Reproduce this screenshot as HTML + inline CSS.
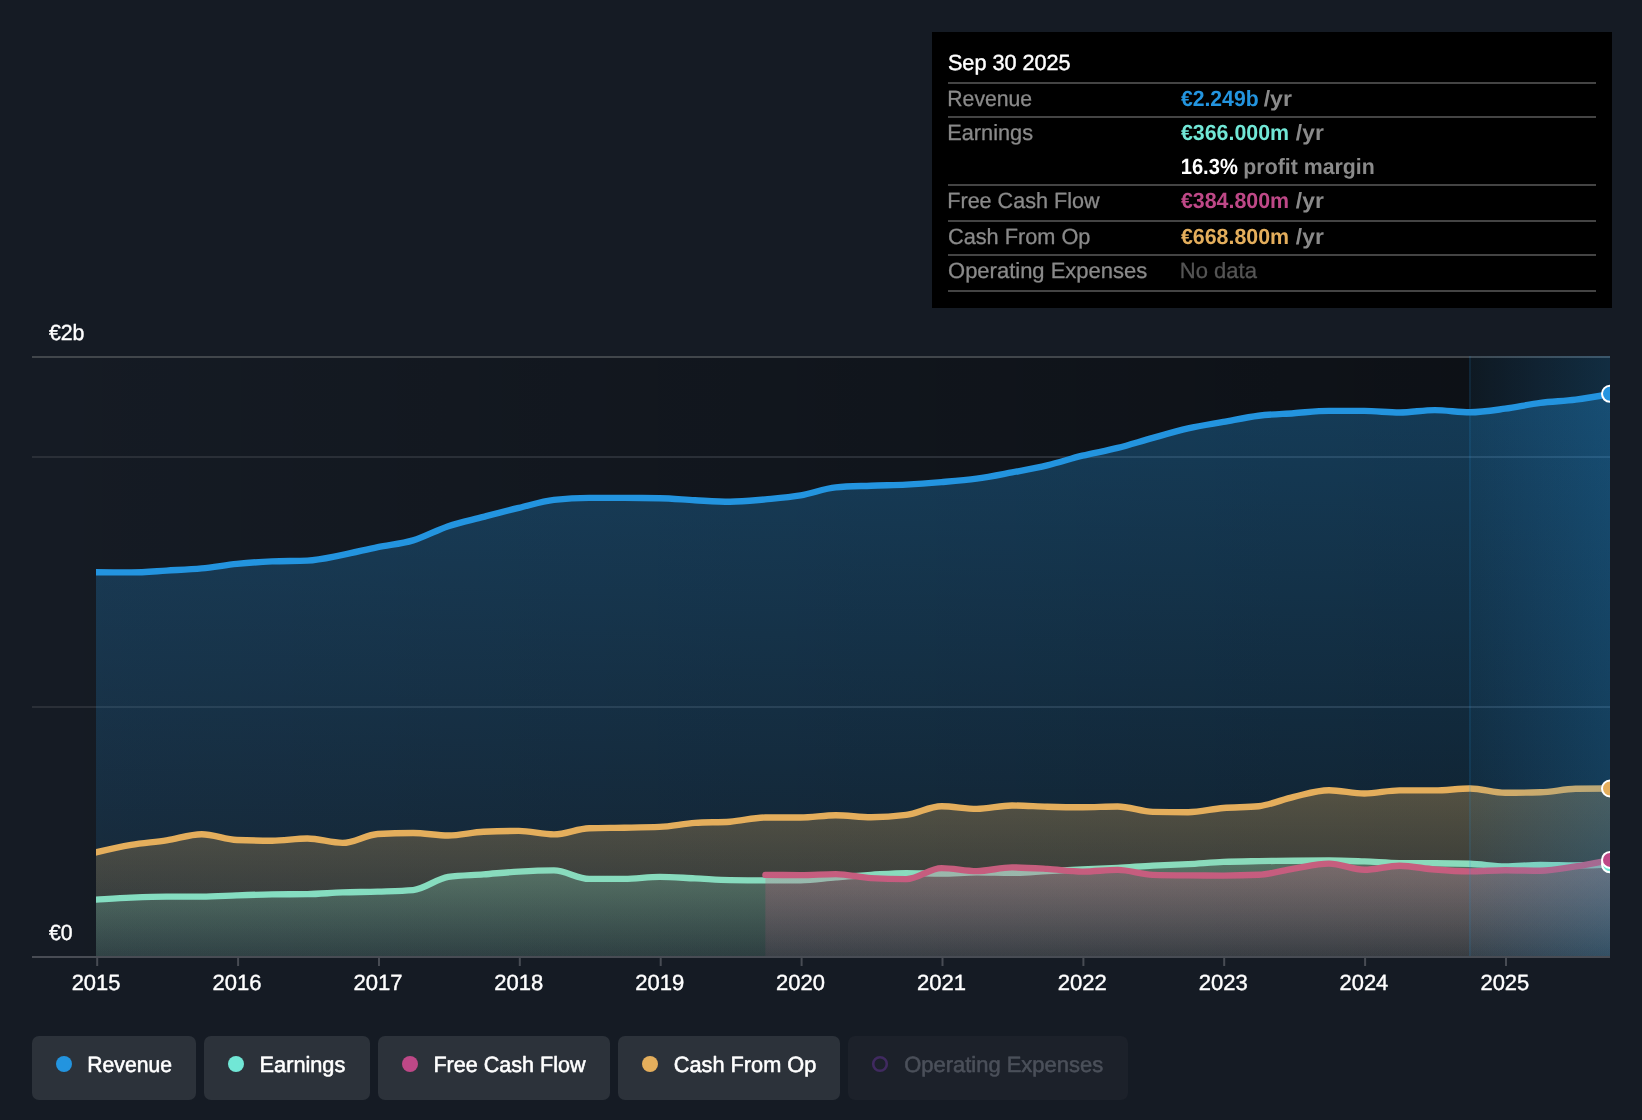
<!DOCTYPE html>
<html lang="en"><head><meta charset="utf-8"><title>Earnings and Revenue History</title>
<style>
html,body{margin:0;padding:0;background:#151b24}
body{width:1642px;height:1120px;overflow:hidden}
svg{display:block;text-rendering:geometricPrecision;will-change:transform;-webkit-font-smoothing:antialiased}
</style></head><body>
<svg width="1642" height="1120" viewBox="0 0 1642 1120">
<defs>
<linearGradient id="gdark" x1="0" y1="0" x2="1" y2="0"><stop offset="0" stop-color="#000" stop-opacity="0"/><stop offset="1" stop-color="#000" stop-opacity="0.42"/></linearGradient>
<linearGradient id="ghl" x1="0" y1="0" x2="1" y2="0"><stop offset="0" stop-color="#2394df" stop-opacity="0.06"/><stop offset="1" stop-color="#2394df" stop-opacity="0.22"/></linearGradient>
<linearGradient id="grev" gradientUnits="userSpaceOnUse" x1="0" y1="394" x2="0" y2="957"><stop offset="0" stop-color="#2394df" stop-opacity="0.32"/><stop offset="1" stop-color="#2394df" stop-opacity="0.09"/></linearGradient>
<linearGradient id="gear" gradientUnits="userSpaceOnUse" x1="0" y1="860" x2="0" y2="957"><stop offset="0" stop-color="#71e7d6" stop-opacity="0.32"/><stop offset="1" stop-color="#71e7d6" stop-opacity="0.09"/></linearGradient>
<linearGradient id="gfcf" gradientUnits="userSpaceOnUse" x1="0" y1="859" x2="0" y2="957"><stop offset="0" stop-color="#be4887" stop-opacity="0.32"/><stop offset="1" stop-color="#be4887" stop-opacity="0.09"/></linearGradient>
<linearGradient id="gcfo" gradientUnits="userSpaceOnUse" x1="0" y1="788" x2="0" y2="957"><stop offset="0" stop-color="#e4ae5c" stop-opacity="0.32"/><stop offset="1" stop-color="#e4ae5c" stop-opacity="0.09"/></linearGradient>
<clipPath id="plot"><rect x="96" y="340" width="1514" height="640"/></clipPath>
</defs>
<rect width="1642" height="1120" fill="#151b24"/>
<rect x="32" y="357" width="1578" height="600" fill="url(#gdark)"/>
<rect x="32" y="356" width="1578" height="2" fill="#41464b"/>
<rect x="32" y="456" width="1578" height="2" fill="#2a2f37"/>
<rect x="32" y="706" width="1578" height="2" fill="#2a2f37"/>
<g clip-path="url(#plot)" fill="none" stroke-width="6.4" stroke-linejoin="round" stroke-linecap="round">
<path d="M96.0,572.2C107.7,572.3 119.5,572.4 131.2,572.4C143.0,572.4 154.7,571.3 166.5,570.6C178.2,569.9 189.9,569.5 201.7,568.4C213.4,567.3 225.2,565.1 236.9,563.9C248.7,562.7 260.4,561.9 272.1,561.4C283.9,560.9 295.6,561.1 307.4,560.6C319.1,560.1 330.9,557.1 342.6,554.9C354.4,552.6 366.1,549.5 377.8,547.1C389.6,544.7 401.3,543.9 413.1,540.4C424.8,536.9 436.6,530.1 448.3,526.2C460.0,522.3 471.8,520.0 483.5,516.9C495.3,513.8 507.0,510.7 518.8,507.9C530.5,505.1 542.2,501.2 554.0,499.9C565.7,498.6 577.5,497.9 589.2,497.9C601.0,497.9 612.7,497.9 624.4,497.9C636.2,497.9 647.9,498.0 659.7,498.2C671.4,498.4 683.2,499.6 694.9,500.2C706.7,500.8 718.4,501.7 730.1,501.7C741.9,501.7 753.6,500.4 765.4,499.4C777.1,498.3 788.9,497.4 800.6,495.4C812.3,493.4 824.1,488.5 835.8,487.4C847.6,486.3 859.3,486.2 871.1,485.7C882.8,485.2 894.5,485.2 906.3,484.6C918.0,484.0 929.8,483.1 941.5,482.1C953.3,481.1 965.0,480.2 976.7,478.6C988.5,477.0 1000.2,474.6 1012.0,472.4C1023.7,470.2 1035.5,468.2 1047.2,465.4C1059.0,462.6 1070.7,458.6 1082.4,455.7C1094.2,452.8 1105.9,450.9 1117.7,447.9C1129.4,444.9 1141.2,441.1 1152.9,437.9C1164.6,434.6 1176.4,431.1 1188.1,428.4C1199.9,425.7 1211.6,424.0 1223.4,421.9C1235.1,419.8 1246.8,417.1 1258.6,415.7C1270.3,414.2 1282.1,414.0 1293.8,413.2C1305.6,412.4 1317.3,410.9 1329.0,410.9C1340.8,410.9 1352.5,410.9 1364.3,410.9C1376.0,410.9 1387.8,412.5 1399.5,412.5C1411.3,412.5 1423.0,410.1 1434.7,410.1C1446.5,410.1 1458.2,412.3 1470.0,412.3C1481.7,412.3 1493.5,410.3 1505.2,408.7C1516.9,407.1 1528.7,404.3 1540.4,402.8C1552.2,401.3 1563.9,401.2 1575.7,399.7C1587.4,398.2 1599.1,396.0 1610.9,393.8L1610.9,957L96.0,957Z" fill="url(#grev)" stroke="none"/>
<path d="M96.0,572.2C107.7,572.3 119.5,572.4 131.2,572.4C143.0,572.4 154.7,571.3 166.5,570.6C178.2,569.9 189.9,569.5 201.7,568.4C213.4,567.3 225.2,565.1 236.9,563.9C248.7,562.7 260.4,561.9 272.1,561.4C283.9,560.9 295.6,561.1 307.4,560.6C319.1,560.1 330.9,557.1 342.6,554.9C354.4,552.6 366.1,549.5 377.8,547.1C389.6,544.7 401.3,543.9 413.1,540.4C424.8,536.9 436.6,530.1 448.3,526.2C460.0,522.3 471.8,520.0 483.5,516.9C495.3,513.8 507.0,510.7 518.8,507.9C530.5,505.1 542.2,501.2 554.0,499.9C565.7,498.6 577.5,497.9 589.2,497.9C601.0,497.9 612.7,497.9 624.4,497.9C636.2,497.9 647.9,498.0 659.7,498.2C671.4,498.4 683.2,499.6 694.9,500.2C706.7,500.8 718.4,501.7 730.1,501.7C741.9,501.7 753.6,500.4 765.4,499.4C777.1,498.3 788.9,497.4 800.6,495.4C812.3,493.4 824.1,488.5 835.8,487.4C847.6,486.3 859.3,486.2 871.1,485.7C882.8,485.2 894.5,485.2 906.3,484.6C918.0,484.0 929.8,483.1 941.5,482.1C953.3,481.1 965.0,480.2 976.7,478.6C988.5,477.0 1000.2,474.6 1012.0,472.4C1023.7,470.2 1035.5,468.2 1047.2,465.4C1059.0,462.6 1070.7,458.6 1082.4,455.7C1094.2,452.8 1105.9,450.9 1117.7,447.9C1129.4,444.9 1141.2,441.1 1152.9,437.9C1164.6,434.6 1176.4,431.1 1188.1,428.4C1199.9,425.7 1211.6,424.0 1223.4,421.9C1235.1,419.8 1246.8,417.1 1258.6,415.7C1270.3,414.2 1282.1,414.0 1293.8,413.2C1305.6,412.4 1317.3,410.9 1329.0,410.9C1340.8,410.9 1352.5,410.9 1364.3,410.9C1376.0,410.9 1387.8,412.5 1399.5,412.5C1411.3,412.5 1423.0,410.1 1434.7,410.1C1446.5,410.1 1458.2,412.3 1470.0,412.3C1481.7,412.3 1493.5,410.3 1505.2,408.7C1516.9,407.1 1528.7,404.3 1540.4,402.8C1552.2,401.3 1563.9,401.2 1575.7,399.7C1587.4,398.2 1599.1,396.0 1610.9,393.8" stroke="#2394df"/>
<path d="M96.0,899.6C107.7,898.9 119.5,898.1 131.2,897.6C143.0,897.1 154.7,896.6 166.5,896.6C178.2,896.6 189.9,896.6 201.7,896.6C213.4,896.6 225.2,895.8 236.9,895.4C248.7,895.0 260.4,894.6 272.1,894.4C283.9,894.2 295.6,894.3 307.4,894.1C319.1,893.9 330.9,892.8 342.6,892.4C354.4,892.0 366.1,892.0 377.8,891.6C389.6,891.2 401.3,891.1 413.1,890.1C424.8,889.1 436.6,878.6 448.3,876.9C460.0,875.2 471.8,875.3 483.5,874.4C495.3,873.5 507.0,872.3 518.8,871.6C530.5,870.9 542.2,870.4 554.0,870.4C565.7,870.4 577.5,878.9 589.2,878.9C601.0,878.9 612.7,878.9 624.4,878.9C636.2,878.9 647.9,876.9 659.7,876.9C671.4,876.9 683.2,877.9 694.9,878.4C706.7,878.9 718.4,879.9 730.1,880.1C741.9,880.3 753.6,880.4 765.4,880.4C777.1,880.4 788.9,880.4 800.6,880.4C812.3,880.4 824.1,878.3 835.8,877.4C847.6,876.5 859.3,875.6 871.1,874.9C882.8,874.2 894.5,873.1 906.3,873.1C918.0,873.1 929.8,873.6 941.5,873.6C953.3,873.6 965.0,872.4 976.7,872.4C988.5,872.4 1000.2,872.9 1012.0,872.9C1023.7,872.9 1035.5,871.7 1047.2,871.1C1059.0,870.5 1070.7,869.9 1082.4,869.4C1094.2,868.9 1105.9,868.5 1117.7,867.9C1129.4,867.3 1141.2,866.2 1152.9,865.6C1164.6,865.0 1176.4,864.7 1188.1,864.1C1199.9,863.5 1211.6,862.4 1223.4,861.9C1235.1,861.4 1246.8,861.3 1258.6,861.1C1270.3,860.9 1282.1,860.8 1293.8,860.7C1305.6,860.6 1317.3,860.5 1329.0,860.5C1340.8,860.5 1352.5,861.0 1364.3,861.4C1376.0,861.8 1387.8,863.0 1399.5,863.1C1411.3,863.2 1423.0,863.2 1434.7,863.3C1446.5,863.4 1458.2,863.5 1470.0,863.8C1481.7,864.1 1493.5,866.5 1505.2,866.5C1516.9,866.5 1528.7,864.9 1540.4,864.9C1552.2,864.9 1563.9,865.4 1575.7,865.4C1587.4,865.4 1599.1,864.8 1610.9,864.3L1610.9,957L96.0,957Z" fill="url(#gear)" stroke="none"/>
<path d="M96.0,899.6C107.7,898.9 119.5,898.1 131.2,897.6C143.0,897.1 154.7,896.6 166.5,896.6C178.2,896.6 189.9,896.6 201.7,896.6C213.4,896.6 225.2,895.8 236.9,895.4C248.7,895.0 260.4,894.6 272.1,894.4C283.9,894.2 295.6,894.3 307.4,894.1C319.1,893.9 330.9,892.8 342.6,892.4C354.4,892.0 366.1,892.0 377.8,891.6C389.6,891.2 401.3,891.1 413.1,890.1C424.8,889.1 436.6,878.6 448.3,876.9C460.0,875.2 471.8,875.3 483.5,874.4C495.3,873.5 507.0,872.3 518.8,871.6C530.5,870.9 542.2,870.4 554.0,870.4C565.7,870.4 577.5,878.9 589.2,878.9C601.0,878.9 612.7,878.9 624.4,878.9C636.2,878.9 647.9,876.9 659.7,876.9C671.4,876.9 683.2,877.9 694.9,878.4C706.7,878.9 718.4,879.9 730.1,880.1C741.9,880.3 753.6,880.4 765.4,880.4C777.1,880.4 788.9,880.4 800.6,880.4C812.3,880.4 824.1,878.3 835.8,877.4C847.6,876.5 859.3,875.6 871.1,874.9C882.8,874.2 894.5,873.1 906.3,873.1C918.0,873.1 929.8,873.6 941.5,873.6C953.3,873.6 965.0,872.4 976.7,872.4C988.5,872.4 1000.2,872.9 1012.0,872.9C1023.7,872.9 1035.5,871.7 1047.2,871.1C1059.0,870.5 1070.7,869.9 1082.4,869.4C1094.2,868.9 1105.9,868.5 1117.7,867.9C1129.4,867.3 1141.2,866.2 1152.9,865.6C1164.6,865.0 1176.4,864.7 1188.1,864.1C1199.9,863.5 1211.6,862.4 1223.4,861.9C1235.1,861.4 1246.8,861.3 1258.6,861.1C1270.3,860.9 1282.1,860.8 1293.8,860.7C1305.6,860.6 1317.3,860.5 1329.0,860.5C1340.8,860.5 1352.5,861.0 1364.3,861.4C1376.0,861.8 1387.8,863.0 1399.5,863.1C1411.3,863.2 1423.0,863.2 1434.7,863.3C1446.5,863.4 1458.2,863.5 1470.0,863.8C1481.7,864.1 1493.5,866.5 1505.2,866.5C1516.9,866.5 1528.7,864.9 1540.4,864.9C1552.2,864.9 1563.9,865.4 1575.7,865.4C1587.4,865.4 1599.1,864.8 1610.9,864.3" stroke="#71e7d6"/>
<path d="M765.4,874.9C777.1,875.0 788.9,875.1 800.6,875.1C812.3,875.1 824.1,874.1 835.8,874.1C847.6,874.1 859.3,877.4 871.1,878.1C882.8,878.8 894.5,879.1 906.3,879.1C918.0,879.1 929.8,868.1 941.5,868.1C953.3,868.1 965.0,871.1 976.7,871.1C988.5,871.1 1000.2,867.4 1012.0,867.4C1023.7,867.4 1035.5,868.2 1047.2,868.9C1059.0,869.6 1070.7,871.6 1082.4,871.6C1094.2,871.6 1105.9,869.9 1117.7,869.9C1129.4,869.9 1141.2,874.6 1152.9,874.9C1164.6,875.2 1176.4,875.3 1188.1,875.4C1199.9,875.5 1211.6,875.6 1223.4,875.6C1235.1,875.6 1246.8,875.3 1258.6,874.8C1270.3,874.3 1282.1,870.5 1293.8,868.6C1305.6,866.7 1317.3,863.6 1329.0,863.6C1340.8,863.6 1352.5,869.8 1364.3,869.8C1376.0,869.8 1387.8,865.7 1399.5,865.7C1411.3,865.7 1423.0,868.6 1434.7,869.5C1446.5,870.5 1458.2,871.4 1470.0,871.4C1481.7,871.4 1493.5,870.2 1505.2,870.2C1516.9,870.2 1528.7,870.7 1540.4,870.7C1552.2,870.7 1563.9,868.2 1575.7,866.4C1587.4,864.6 1599.1,862.2 1610.9,859.9L1610.9,957L765.4,957Z" fill="url(#gfcf)" stroke="none"/>
<path d="M765.4,874.9C777.1,875.0 788.9,875.1 800.6,875.1C812.3,875.1 824.1,874.1 835.8,874.1C847.6,874.1 859.3,877.4 871.1,878.1C882.8,878.8 894.5,879.1 906.3,879.1C918.0,879.1 929.8,868.1 941.5,868.1C953.3,868.1 965.0,871.1 976.7,871.1C988.5,871.1 1000.2,867.4 1012.0,867.4C1023.7,867.4 1035.5,868.2 1047.2,868.9C1059.0,869.6 1070.7,871.6 1082.4,871.6C1094.2,871.6 1105.9,869.9 1117.7,869.9C1129.4,869.9 1141.2,874.6 1152.9,874.9C1164.6,875.2 1176.4,875.3 1188.1,875.4C1199.9,875.5 1211.6,875.6 1223.4,875.6C1235.1,875.6 1246.8,875.3 1258.6,874.8C1270.3,874.3 1282.1,870.5 1293.8,868.6C1305.6,866.7 1317.3,863.6 1329.0,863.6C1340.8,863.6 1352.5,869.8 1364.3,869.8C1376.0,869.8 1387.8,865.7 1399.5,865.7C1411.3,865.7 1423.0,868.6 1434.7,869.5C1446.5,870.5 1458.2,871.4 1470.0,871.4C1481.7,871.4 1493.5,870.2 1505.2,870.2C1516.9,870.2 1528.7,870.7 1540.4,870.7C1552.2,870.7 1563.9,868.2 1575.7,866.4C1587.4,864.6 1599.1,862.2 1610.9,859.9" stroke="#be4887"/>
<path d="M96.0,852.4C107.7,849.6 119.5,846.9 131.2,844.9C143.0,842.9 154.7,842.2 166.5,840.4C178.2,838.6 189.9,834.2 201.7,834.2C213.4,834.2 225.2,839.5 236.9,840.0C248.7,840.5 260.4,840.7 272.1,840.7C283.9,840.7 295.6,838.5 307.4,838.5C319.1,838.5 330.9,842.9 342.6,842.9C354.4,842.9 366.1,834.7 377.8,834.0C389.6,833.3 401.3,833.0 413.1,833.0C424.8,833.0 436.6,835.5 448.3,835.5C460.0,835.5 471.8,832.2 483.5,831.7C495.3,831.2 507.0,830.9 518.8,830.9C530.5,830.9 542.2,834.4 554.0,834.4C565.7,834.4 577.5,828.5 589.2,828.2C601.0,827.9 612.7,827.9 624.4,827.7C636.2,827.5 647.9,827.4 659.7,826.9C671.4,826.4 683.2,823.7 694.9,822.9C706.7,822.1 718.4,822.5 730.1,821.7C741.9,820.9 753.6,817.5 765.4,817.5C777.1,817.5 788.9,817.5 800.6,817.5C812.3,817.5 824.1,815.2 835.8,815.2C847.6,815.2 859.3,817.2 871.1,817.2C882.8,817.2 894.5,816.4 906.3,814.9C918.0,813.4 929.8,806.2 941.5,806.2C953.3,806.2 965.0,808.9 976.7,808.9C988.5,808.9 1000.2,805.5 1012.0,805.5C1023.7,805.5 1035.5,806.4 1047.2,806.7C1059.0,807.0 1070.7,807.2 1082.4,807.2C1094.2,807.2 1105.9,806.5 1117.7,806.5C1129.4,806.5 1141.2,811.7 1152.9,811.9C1164.6,812.1 1176.4,812.2 1188.1,812.2C1199.9,812.2 1211.6,809.0 1223.4,808.0C1235.1,807.0 1246.8,807.4 1258.6,806.2C1270.3,805.0 1282.1,799.5 1293.8,796.8C1305.6,794.1 1317.3,790.2 1329.0,790.2C1340.8,790.2 1352.5,793.5 1364.3,793.5C1376.0,793.5 1387.8,790.4 1399.5,790.4C1411.3,790.4 1423.0,790.4 1434.7,790.4C1446.5,790.4 1458.2,788.5 1470.0,788.5C1481.7,788.5 1493.5,792.8 1505.2,792.8C1516.9,792.8 1528.7,792.6 1540.4,792.3C1552.2,792.0 1563.9,789.0 1575.7,788.8C1587.4,788.6 1599.1,788.5 1610.9,788.5L1610.9,957L96.0,957Z" fill="url(#gcfo)" stroke="none"/>
<path d="M96.0,852.4C107.7,849.6 119.5,846.9 131.2,844.9C143.0,842.9 154.7,842.2 166.5,840.4C178.2,838.6 189.9,834.2 201.7,834.2C213.4,834.2 225.2,839.5 236.9,840.0C248.7,840.5 260.4,840.7 272.1,840.7C283.9,840.7 295.6,838.5 307.4,838.5C319.1,838.5 330.9,842.9 342.6,842.9C354.4,842.9 366.1,834.7 377.8,834.0C389.6,833.3 401.3,833.0 413.1,833.0C424.8,833.0 436.6,835.5 448.3,835.5C460.0,835.5 471.8,832.2 483.5,831.7C495.3,831.2 507.0,830.9 518.8,830.9C530.5,830.9 542.2,834.4 554.0,834.4C565.7,834.4 577.5,828.5 589.2,828.2C601.0,827.9 612.7,827.9 624.4,827.7C636.2,827.5 647.9,827.4 659.7,826.9C671.4,826.4 683.2,823.7 694.9,822.9C706.7,822.1 718.4,822.5 730.1,821.7C741.9,820.9 753.6,817.5 765.4,817.5C777.1,817.5 788.9,817.5 800.6,817.5C812.3,817.5 824.1,815.2 835.8,815.2C847.6,815.2 859.3,817.2 871.1,817.2C882.8,817.2 894.5,816.4 906.3,814.9C918.0,813.4 929.8,806.2 941.5,806.2C953.3,806.2 965.0,808.9 976.7,808.9C988.5,808.9 1000.2,805.5 1012.0,805.5C1023.7,805.5 1035.5,806.4 1047.2,806.7C1059.0,807.0 1070.7,807.2 1082.4,807.2C1094.2,807.2 1105.9,806.5 1117.7,806.5C1129.4,806.5 1141.2,811.7 1152.9,811.9C1164.6,812.1 1176.4,812.2 1188.1,812.2C1199.9,812.2 1211.6,809.0 1223.4,808.0C1235.1,807.0 1246.8,807.4 1258.6,806.2C1270.3,805.0 1282.1,799.5 1293.8,796.8C1305.6,794.1 1317.3,790.2 1329.0,790.2C1340.8,790.2 1352.5,793.5 1364.3,793.5C1376.0,793.5 1387.8,790.4 1399.5,790.4C1411.3,790.4 1423.0,790.4 1434.7,790.4C1446.5,790.4 1458.2,788.5 1470.0,788.5C1481.7,788.5 1493.5,792.8 1505.2,792.8C1516.9,792.8 1528.7,792.6 1540.4,792.3C1552.2,792.0 1563.9,789.0 1575.7,788.8C1587.4,788.6 1599.1,788.5 1610.9,788.5" stroke="#e4ae5c"/>
</g>
<rect x="1469" y="356" width="141" height="601" fill="url(#ghl)"/>
<rect x="1469" y="356" width="2" height="601" fill="#2394df" fill-opacity="0.12"/>
<rect x="32" y="956" width="1578" height="2" fill="#484c54"/>
<rect x="96.2" y="957" width="2" height="9" fill="#484c54"/><rect x="237.1" y="957" width="2" height="9" fill="#484c54"/><rect x="378.0" y="957" width="2" height="9" fill="#484c54"/><rect x="518.8" y="957" width="2" height="9" fill="#484c54"/><rect x="659.7" y="957" width="2" height="9" fill="#484c54"/><rect x="800.6" y="957" width="2" height="9" fill="#484c54"/><rect x="941.5" y="957" width="2" height="9" fill="#484c54"/><rect x="1082.4" y="957" width="2" height="9" fill="#484c54"/><rect x="1223.2" y="957" width="2" height="9" fill="#484c54"/><rect x="1364.1" y="957" width="2" height="9" fill="#484c54"/><rect x="1505.0" y="957" width="2" height="9" fill="#484c54"/>
<g clip-path="url(#plot)" stroke="#fff" stroke-width="2">
<circle cx="1610" cy="393.8" r="8" fill="#2394df"/>
<circle cx="1610" cy="864.3" r="8" fill="#71e7d6"/>
<circle cx="1610" cy="788.5" r="8" fill="#e4ae5c"/>
<circle cx="1610" cy="859.9" r="8" fill="#be4887"/>
</g>
<rect x="932" y="32" width="680" height="276" fill="#000"/>
<rect x="948" y="82" width="648" height="2" fill="#444"/><rect x="948" y="116" width="648" height="2" fill="#444"/><rect x="948" y="184" width="648" height="2" fill="#444"/><rect x="948" y="220" width="648" height="2" fill="#444"/><rect x="948" y="254" width="648" height="2" fill="#444"/><rect x="948" y="290" width="648" height="2" fill="#444"/>
<rect x="32" y="1036" width="164" height="64" rx="7" fill="#2c323a"/><circle cx="64" cy="1064" r="8" fill="#2394df"/><rect x="204" y="1036" width="166" height="64" rx="7" fill="#2c323a"/><circle cx="236" cy="1064" r="8" fill="#71e7d6"/><rect x="378" y="1036" width="232" height="64" rx="7" fill="#2c323a"/><circle cx="410" cy="1064" r="8" fill="#be4887"/><rect x="618" y="1036" width="222" height="64" rx="7" fill="#2c323a"/><circle cx="650" cy="1064" r="8" fill="#e4ae5c"/><rect x="848" y="1036" width="280" height="64" rx="7" fill="#1c212a"/><circle cx="880" cy="1064" r="6.8" fill="none" stroke="#402a60" stroke-width="2.6"/>
<g font-family="'Liberation Sans', sans-serif" font-size="22.0" stroke-linejoin="round">
<text x="947.94" y="69.9" textLength="122.66" lengthAdjust="spacingAndGlyphs" fill="#fff" stroke="#fff" stroke-width="0.45">Sep 30 2025</text>
<text x="947.32" y="105.8" textLength="84.84" lengthAdjust="spacingAndGlyphs" fill="#8a8a8a" stroke="#8a8a8a" stroke-width="0.3">Revenue</text>
<text x="947.27" y="139.7" textLength="85.77" lengthAdjust="spacingAndGlyphs" fill="#8a8a8a" stroke="#8a8a8a" stroke-width="0.3">Earnings</text>
<text x="947.28" y="208.0" textLength="152.25" lengthAdjust="spacingAndGlyphs" fill="#8a8a8a" stroke="#8a8a8a" stroke-width="0.3">Free Cash Flow</text>
<text x="947.96" y="243.8" textLength="142.51" lengthAdjust="spacingAndGlyphs" fill="#8a8a8a" stroke="#8a8a8a" stroke-width="0.3">Cash From Op</text>
<text x="948.05" y="277.8" textLength="199.20" lengthAdjust="spacingAndGlyphs" fill="#8a8a8a" stroke="#8a8a8a" stroke-width="0.3">Operating Expenses</text>
<text x="1180.90" y="105.8" textLength="77.70" lengthAdjust="spacingAndGlyphs" fill="#2394df" font-weight="bold">€2.249b</text>
<text x="1263.69" y="105.8" textLength="28.29" lengthAdjust="spacingAndGlyphs" fill="#8a8a8a" font-weight="bold">/yr</text>
<text x="1180.90" y="139.7" textLength="108.22" lengthAdjust="spacingAndGlyphs" fill="#71e7d6" font-weight="bold">€366.000m</text>
<text x="1295.89" y="139.7" textLength="27.98" lengthAdjust="spacingAndGlyphs" fill="#8a8a8a" font-weight="bold">/yr</text>
<text x="1180.71" y="174.0" textLength="57.10" lengthAdjust="spacingAndGlyphs" fill="#fff" font-weight="bold">16.3%</text>
<text x="1243.34" y="174.0" textLength="131.45" lengthAdjust="spacingAndGlyphs" fill="#8a8a8a" font-weight="bold">profit margin</text>
<text x="1180.90" y="208.0" textLength="108.22" lengthAdjust="spacingAndGlyphs" fill="#be4887" font-weight="bold">€384.800m</text>
<text x="1295.89" y="208.0" textLength="27.98" lengthAdjust="spacingAndGlyphs" fill="#8a8a8a" font-weight="bold">/yr</text>
<text x="1180.90" y="243.8" textLength="108.22" lengthAdjust="spacingAndGlyphs" fill="#e4ae5c" font-weight="bold">€668.800m</text>
<text x="1295.89" y="243.8" textLength="27.98" lengthAdjust="spacingAndGlyphs" fill="#8a8a8a" font-weight="bold">/yr</text>
<text x="1179.75" y="277.8" textLength="77.14" lengthAdjust="spacingAndGlyphs" fill="#555" stroke="#555" stroke-width="0.3">No data</text>
<text x="48.90" y="339.5" textLength="35.61" lengthAdjust="spacingAndGlyphs" fill="#fff" stroke="#fff" stroke-width="0.4">€2b</text>
<text x="48.90" y="939.5" textLength="23.60" lengthAdjust="spacingAndGlyphs" fill="#fff" stroke="#fff" stroke-width="0.4">€0</text>
<text x="71.65" y="989.9" textLength="48.83" lengthAdjust="spacingAndGlyphs" fill="#fff" stroke="#fff" stroke-width="0.4">2015</text>
<text x="212.53" y="989.9" textLength="48.94" lengthAdjust="spacingAndGlyphs" fill="#fff" stroke="#fff" stroke-width="0.4">2016</text>
<text x="353.41" y="989.9" textLength="49.04" lengthAdjust="spacingAndGlyphs" fill="#fff" stroke="#fff" stroke-width="0.4">2017</text>
<text x="494.29" y="989.9" textLength="48.94" lengthAdjust="spacingAndGlyphs" fill="#fff" stroke="#fff" stroke-width="0.4">2018</text>
<text x="635.17" y="989.9" textLength="49.04" lengthAdjust="spacingAndGlyphs" fill="#fff" stroke="#fff" stroke-width="0.4">2019</text>
<text x="776.05" y="989.9" textLength="48.83" lengthAdjust="spacingAndGlyphs" fill="#fff" stroke="#fff" stroke-width="0.4">2020</text>
<text x="916.93" y="989.9" textLength="49.04" lengthAdjust="spacingAndGlyphs" fill="#fff" stroke="#fff" stroke-width="0.4">2021</text>
<text x="1057.81" y="989.9" textLength="49.04" lengthAdjust="spacingAndGlyphs" fill="#fff" stroke="#fff" stroke-width="0.4">2022</text>
<text x="1198.69" y="989.9" textLength="48.94" lengthAdjust="spacingAndGlyphs" fill="#fff" stroke="#fff" stroke-width="0.4">2023</text>
<text x="1339.58" y="989.9" textLength="48.62" lengthAdjust="spacingAndGlyphs" fill="#fff" stroke="#fff" stroke-width="0.4">2024</text>
<text x="1480.45" y="989.9" textLength="48.83" lengthAdjust="spacingAndGlyphs" fill="#fff" stroke="#fff" stroke-width="0.4">2025</text>
<text x="87.35" y="1071.8" textLength="84.58" lengthAdjust="spacingAndGlyphs" fill="#fff" stroke="#fff" stroke-width="0.55">Revenue</text>
<text x="259.60" y="1071.8" textLength="85.72" lengthAdjust="spacingAndGlyphs" fill="#fff" stroke="#fff" stroke-width="0.55">Earnings</text>
<text x="433.41" y="1071.8" textLength="152.10" lengthAdjust="spacingAndGlyphs" fill="#fff" stroke="#fff" stroke-width="0.55">Free Cash Flow</text>
<text x="673.79" y="1071.8" textLength="142.56" lengthAdjust="spacingAndGlyphs" fill="#fff" stroke="#fff" stroke-width="0.55">Cash From Op</text>
<text x="904.18" y="1071.8" textLength="198.95" lengthAdjust="spacingAndGlyphs" fill="#4b505a" stroke="#4b505a" stroke-width="0.55">Operating Expenses</text>
</g>
</svg>
</body></html>
